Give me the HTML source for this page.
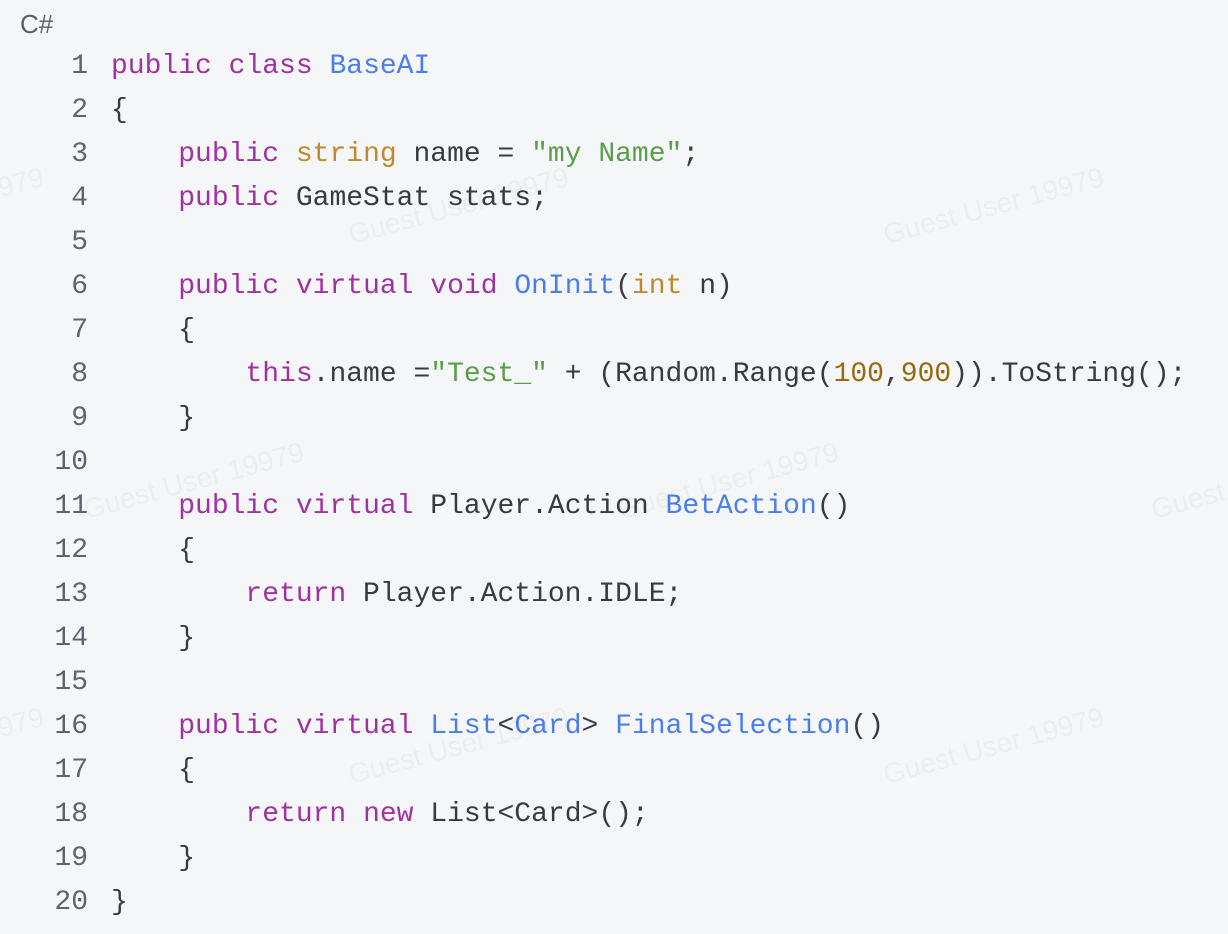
<!DOCTYPE html>
<html><head><meta charset="utf-8"><style>
html,body{margin:0;padding:0;background:#f5f6f8;width:1228px;height:934px;overflow:hidden;position:relative}
.lang{position:absolute;left:20px;top:9px;font:26px "Liberation Sans",sans-serif;color:#5a5d63}
.code{position:absolute;left:0;top:45px;font:28px/44px "Liberation Mono",monospace;color:#383a42;white-space:pre}
.ln{display:inline-block;width:88px;text-align:right;color:#5f636b;margin-right:23px}
.k{color:#a031a0}.f{color:#4a7ee8}.t{color:#c08a2c}.s{color:#5a9e4b}.n{color:#98690c}
.wm{position:absolute;font:28px "Liberation Sans",sans-serif;color:rgba(0,0,0,0.035);transform:rotate(-15deg);white-space:nowrap}
</style></head><body>
<div class="lang">C#</div>
<div class="code"><span class="ln">1</span><span class="k">public</span> <span class="k">class</span> <span class="f">BaseAI</span>
<span class="ln">2</span>{
<span class="ln">3</span>    <span class="k">public</span> <span class="t">string</span> name = <span class="s">"my Name"</span>;
<span class="ln">4</span>    <span class="k">public</span> GameStat stats;
<span class="ln">5</span>
<span class="ln">6</span>    <span class="k">public</span> <span class="k">virtual</span> <span class="k">void</span> <span class="f">OnInit</span>(<span class="t">int</span> n)
<span class="ln">7</span>    {
<span class="ln">8</span>        <span class="k">this</span>.name =<span class="s">"Test_"</span> + (Random.Range(<span class="n">100</span>,<span class="n">900</span>)).ToString();
<span class="ln">9</span>    }
<span class="ln">10</span>
<span class="ln">11</span>    <span class="k">public</span> <span class="k">virtual</span> Player.Action <span class="f">BetAction</span>()
<span class="ln">12</span>    {
<span class="ln">13</span>        <span class="k">return</span> Player.Action.IDLE;
<span class="ln">14</span>    }
<span class="ln">15</span>
<span class="ln">16</span>    <span class="k">public</span> <span class="k">virtual</span> <span class="f">List</span>&lt;<span class="f">Card</span>&gt; <span class="f">FinalSelection</span>()
<span class="ln">17</span>    {
<span class="ln">18</span>        <span class="k">return</span> <span class="k">new</span> List&lt;Card&gt;();
<span class="ln">19</span>    }
<span class="ln">20</span>}</div>
<div class="wm" style="left:-180px;top:190px">Guest User 19979</div>
<div class="wm" style="left:345px;top:190px">Guest User 19979</div>
<div class="wm" style="left:880px;top:190px">Guest User 19979</div>
<div class="wm" style="left:80px;top:465px">Guest User 19979</div>
<div class="wm" style="left:615px;top:465px">Guest User 19979</div>
<div class="wm" style="left:1148px;top:465px">Guest User 19979</div>
<div class="wm" style="left:-180px;top:730px">Guest User 19979</div>
<div class="wm" style="left:345px;top:730px">Guest User 19979</div>
<div class="wm" style="left:880px;top:730px">Guest User 19979</div>
</body></html>
